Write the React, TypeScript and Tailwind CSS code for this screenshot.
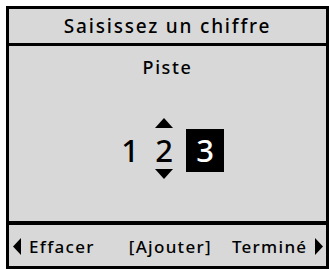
import React from "react";

const font = { fontFamily: '"Noto Sans", "DejaVu Sans", sans-serif' };

function Up() {
  return (
    <svg width="18" height="10" viewBox="0 0 18 10" className="block">
      <polygon points="9,0 18,10 0,10" fill="#000" />
    </svg>
  );
}
function Down() {
  return (
    <svg width="18" height="10" viewBox="0 0 18 10" className="block">
      <polygon points="0,0 18,0 9,10" fill="#000" />
    </svg>
  );
}

export default function App() {
  return (
    <div className="w-[329px] h-[270px] bg-white pt-[6px] pl-[6px]" style={font}>
      <div className="w-[323px] h-[263px] border-[3px] border-black bg-[#d8d8d8] flex flex-col text-black font-medium">
        <div className="h-[34px] flex items-center justify-center text-[19px] tracking-[1.8px] leading-none">
          Saisissez un chiffre
        </div>
        <div className="h-[3px] bg-black" />
        <div className="flex-1 flex flex-col">
          <div className="mt-[12px] self-center text-[18px] tracking-[1.6px] leading-none">Piste</div>
          <div className="mt-[42px] pl-[111px] flex items-start">
            <span className="mt-[17px] w-[20px] text-center text-[31px] leading-none">1</span>
            <div className="ml-[14px] w-[20px] flex flex-col items-center">
              <Up />
              <span className="mt-[7px] text-[31px] leading-none">2</span>
              <div className="mt-[3px]">
                <Down />
              </div>
            </div>
            <div className="ml-[12px] mt-[11px] w-[38px] h-[43px] bg-black text-white text-[31px] leading-none flex items-center justify-center">
              3
            </div>
          </div>
        </div>
        <div className="h-[4px] bg-black" />
        <div className="h-[41px] flex items-center pl-[4px] pr-[3px] pt-[2px] text-[17px] tracking-[1.3px] leading-none">
          <svg width="8" height="17" viewBox="0 0 8 17" className="block">
            <polygon points="8,0 8,17 0,8.5" fill="#000" />
          </svg>
          <span className="ml-[8px]">Effacer</span>
          <span className="ml-[34px]">[Ajouter]</span>
          <span className="ml-[20px]">Terminé</span>
          <svg width="8" height="17" viewBox="0 0 8 17" className="block ml-auto">
            <polygon points="0,0 8,8.5 0,17" fill="#000" />
          </svg>
        </div>
      </div>
    </div>
  );
}
